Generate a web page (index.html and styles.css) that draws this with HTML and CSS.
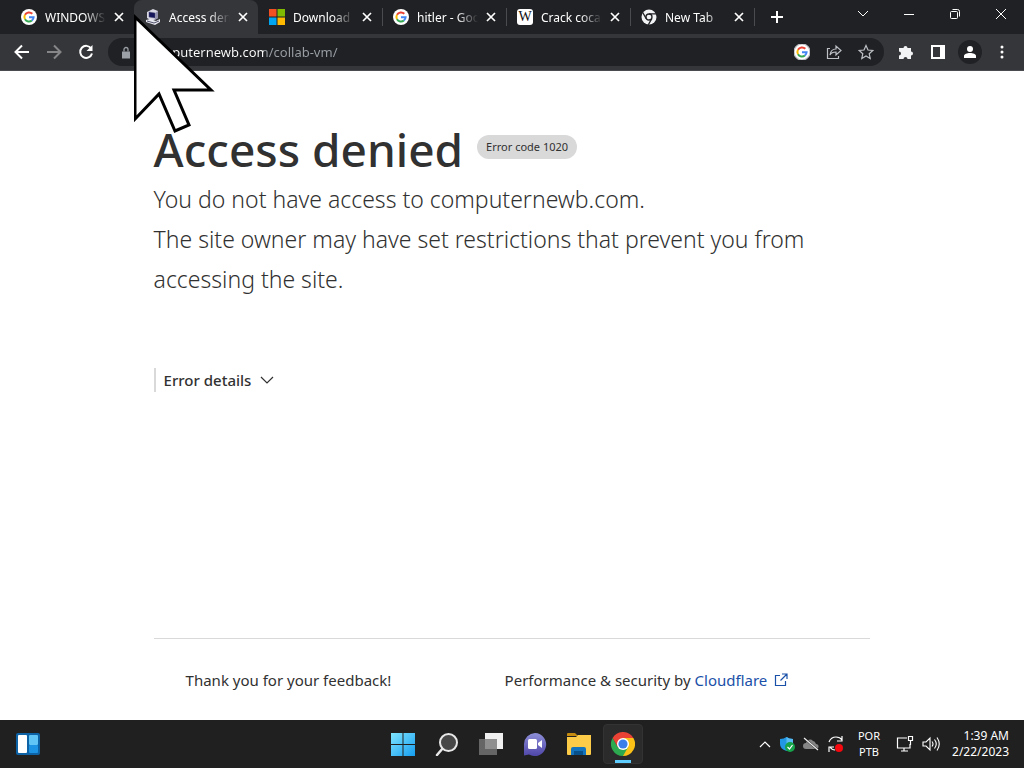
FILE: index.html
```html
<!DOCTYPE html>
<html lang="en">

<head>
	<meta charset="utf-8">
	<meta name="viewport" content="width=device-width, initial-scale=1">
	<title>Access denied</title>
	<link rel="stylesheet" href="styles.css">
</head>

<body>
	<!-- shared icons -->
	<svg class="sprite" aria-hidden="true">
		<symbol id="google" viewBox="0 0 16 16">
			<circle cx="8" cy="8" r="8" fill="#fff" />
			<g fill="none" stroke-width="2">
				<path d="M11.300 4.800A4.600 4.600 0 0 0 4 5.800" stroke="#ea4335" />
				<path d="M4 5.800A4.600 4.600 0 0 0 4 10.300" stroke="#fbbc05" />
				<path d="M4 10.200A4.600 4.600 0 0 0 10.900 11.500" stroke="#34a853" />
				<path d="M10.900 11.500A4.600 4.600 0 0 0 12.600 8.200H8" stroke="#4285f4" />
			</g>
		</symbol>
		<symbol id="close" viewBox="0 0 10 10">
			<path d="M1 1l8 8M9 1L1 9" fill="none" stroke="currentColor" stroke-width="1.700" />
		</symbol>
	</svg>

	<header class="browser">
		<div class="tabs">
			<div class="tab">
				<svg class="favicon" aria-hidden="true"><use href="#google" /></svg>
				<button class="tab-title" type="button">WINDOWS</button>
				<button class="tab-close" type="button" aria-label="Close tab"><svg><use href="#close" /></svg></button>
			</div>
			<div class="tab active">
				<svg class="favicon" viewBox="0 0 16 16" aria-hidden="true">
					<path d="M2 3l6-3 5 2v7l-6 3-5-3z" fill="#d8d8e4" />
					<path d="M4 3l6 1v5L4 8z" fill="#15155c" stroke="#55557a" stroke-width=".5" />
					<path d="M10 4l3-2v7l-3 2z" fill="#9292ae" />
					<path d="M1 11l4-1 6 2 4-2v3l-5 3-9-3z" fill="#e8e8f0" />
					<path d="M2 12l7 2 5-2" fill="none" stroke="#51516b" />
				</svg>
				<button class="tab-title" type="button">Access denied</button>
				<button class="tab-close" type="button" aria-label="Close tab"><svg><use href="#close" /></svg></button>
			</div>
			<div class="tab">
				<svg class="favicon" viewBox="0 0 16 16" aria-hidden="true">
					<path d="M0 0h7.500v7.500H0z" fill="#f25022" />
					<path d="M8.500 0H16v7.500H8.500z" fill="#7fba00" />
					<path d="M0 8.500h7.500V16H0z" fill="#00a4ef" />
					<path d="M8.500 8.500H16V16H8.500z" fill="#ffb900" />
				</svg>
				<button class="tab-title" type="button">Download Windows</button>
				<button class="tab-close" type="button" aria-label="Close tab"><svg><use href="#close" /></svg></button>
			</div>
			<div class="tab divided">
				<svg class="favicon" aria-hidden="true"><use href="#google" /></svg>
				<button class="tab-title" type="button">hitler - Google</button>
				<button class="tab-close" type="button" aria-label="Close tab"><svg><use href="#close" /></svg></button>
			</div>
			<div class="tab divided">
				<span class="favicon wiki" aria-hidden="true">W</span>
				<button class="tab-title" type="button">Crack cocaine</button>
				<button class="tab-close" type="button" aria-label="Close tab"><svg><use href="#close" /></svg></button>
			</div>
			<div class="tab divided">
				<svg class="favicon" viewBox="0 0 16 16" aria-hidden="true">
					<circle cx="8" cy="8" r="7.500" fill="#f1f3f4" />
					<circle cx="8" cy="8" r="3" fill="#f1f3f4" stroke="#202124" stroke-width="1.300" />
					<path d="M8 4.800h7M5.200 9.600L1.700 3.500M10.800 9.600L7.300 15.700" stroke="#202124" stroke-width="1.300" />
				</svg>
				<button class="tab-title" type="button">New Tab</button>
				<button class="tab-close" type="button" aria-label="Close tab"><svg><use href="#close" /></svg></button>
			</div>
			<button class="new-tab divided" type="button" aria-label="New tab">
				<svg width="14" height="14" viewBox="0 0 14 14"><path d="M7 1v12M1 7h12" stroke="#fff" stroke-width="2" /></svg>
			</button>
			<div class="window-buttons">
				<button type="button" aria-label="Search tabs"><svg viewBox="0 0 12 12"><path d="M1 3l5 5 5-5" /></svg></button>
				<button type="button" aria-label="Minimize"><svg viewBox="0 0 12 12"><path d="M1 6.500h10" /></svg></button>
				<button type="button" aria-label="Restore"><svg viewBox="0 0 12 12"><rect x="1.500" y="3.500" width="7" height="7" rx="1" /><path d="M3.500 1.500h5a2 2 0 0 1 2 2v5" /></svg></button>
				<button type="button" aria-label="Close"><svg viewBox="0 0 12 12"><path d="M1 1l10 10M11 1L1 11" /></svg></button>
			</div>
		</div>
		<div class="toolbar">
			<div class="nav">
				<button type="button" aria-label="Back"><svg viewBox="0 0 16 16"><path d="M15 8H2M8 1.500L1.500 8 8 14.500" /></svg></button>
				<button type="button" aria-label="Forward" disabled><svg viewBox="0 0 16 16"><path d="M1 8h13M8 1.500L14.500 8 8 14.500" /></svg></button>
				<button type="button" aria-label="Reload"><svg viewBox="0 0 16 16"><path d="M13.200 4.500A6 6 0 1 0 14 9.500" /><path d="M14.500 1v6h-6z" fill="#fff" stroke="none" /></svg></button>
			</div>
			<div class="address">
				<svg class="lock" viewBox="0 0 10 12" aria-hidden="true"><path d="M1 5h8v7H1z" fill="#9aa0a6" /><path d="M3 5V3a2 2 0 0 1 4 0v2" fill="none" stroke="#9aa0a6" stroke-width="1.300" /></svg>
				<input class="url" type="text" value="computernewb.com/collab-vm/" aria-label="Address">
				<button type="button" aria-label="Search with Google"><svg><use href="#google" /></svg></button>
				<button type="button" aria-label="Share"><svg viewBox="0 0 16 16"><path d="M4 4.500H1.500v10h11V12M4 11c.5-4 3-6 6-6V2l5 4.500-5 4.500V8c-3 0-5 1-6 3z" /></svg></button>
				<button type="button" aria-label="Bookmark"><svg viewBox="0 0 16 16"><path d="M8 1.500l2 4.500 4.800.500-3.600 3.200 1 4.800L8 12l-4.200 2.500 1-4.800L1.200 6.500 6 6z" /></svg></button>
			</div>
			<div class="tools">
				<button type="button" aria-label="Extensions"><svg viewBox="0 0 16 16"><path d="M1 4h4.500a2 2 0 1 1 4 0H13v3.500a2 2 0 1 1 0 4V15H9.500a2 2 0 0 0-4 0H1v-3.500a2 2 0 0 0 0-4z" fill="#f1f3f4" /></svg></button>
				<button type="button" aria-label="Side panel"><svg viewBox="0 0 16 16"><path d="M2 2h12v12H2z" fill="none" stroke="#fff" stroke-width="2" /><path d="M10 2h4v12h-4z" fill="#fff" /></svg></button>
				<button class="profile" type="button" aria-label="Profile"><svg viewBox="0 0 16 16"><circle cx="8" cy="5" r="3" fill="#fff" /><path d="M2 14v-2c0-2 3-3 6-3s6 1 6 3v2z" fill="#fff" /></svg></button>
				<button type="button" aria-label="Menu"><svg viewBox="0 0 16 16"><g fill="#fff"><circle cx="8" cy="3" r="1.500" /><circle cx="8" cy="8" r="1.500" /><circle cx="8" cy="13" r="1.500" /></g></svg></button>
			</div>
		</div>
	</header>

	<main class="page">
		<div class="heading">
			<h1>Access denied</h1>
			<span class="code">Error code 1020</span>
		</div>
		<p class="message">You do not have access to computernewb.com.</p>
		<p class="message">The site owner may have set restrictions that prevent you from accessing the site.</p>
		<button class="details" type="button">Error details
			<svg width="14" height="8" viewBox="0 0 14 8" aria-hidden="true"><path d="M1 1l6 6 6-6" fill="none" stroke="#313131" stroke-width="1.200" /></svg>
		</button>
		<footer class="page-footer">
			<p>Thank you for your feedback!</p>
			<p>Performance &amp; security by <a href="#">Cloudflare
				<svg width="14" height="14" viewBox="0 0 14 14" aria-hidden="true"><path d="M6 2.500H1.500v10h10V8M8 1h5v5M13 1L6.500 7.500" fill="none" stroke="#1a50a8" stroke-width="1.200" /></svg></a></p>
		</footer>
	</main>

	<div class="taskbar">
		<button class="widgets" type="button" aria-label="Widgets">
			<svg width="24" height="22" viewBox="0 0 24 22">
				<rect width="24" height="22" rx="2" fill="#0c62a5" />
				<rect x="2" y="2" width="9" height="18" rx="1" fill="#fff" />
				<rect x="13" y="2" width="9" height="10" rx="1" fill="#61c5f5" />
				<rect x="13" y="12" width="9" height="8" rx="1" fill="#1c93e3" />
			</svg>
		</button>
		<div class="apps">
			<button type="button" aria-label="Start">
				<svg viewBox="0 0 24 24">
					<defs><linearGradient id="win" x2="1" y2="1"><stop stop-color="#80e5ff" /><stop offset="1" stop-color="#159df0" /></linearGradient></defs>
					<path d="M0 1h11.500v11H0zM12.500 1H24v11H12.500zM0 13h11.500v11H0zM12.500 13H24v11H12.500z" fill="url(#win)" />
				</svg>
			</button>
			<button type="button" aria-label="Search">
				<svg viewBox="0 0 24 24"><path d="M8 16l-6 7" stroke="#e8e8e8" stroke-width="2.500" stroke-linecap="round" /><circle cx="13.500" cy="10.500" r="8.500" fill="#484848" stroke="#e8e8e8" stroke-width="2" /></svg>
			</button>
			<button type="button" aria-label="Task view">
				<svg viewBox="0 0 24 24"><path d="M6 1h18v16H6z" fill="#f0f0f0" /><path d="M0 7h18v16H0z" fill="#777" opacity=".8" /></svg>
			</button>
			<button type="button" aria-label="Chat">
				<svg viewBox="0 0 24 24">
					<defs><linearGradient id="chat" x2="0" y2="1"><stop stop-color="#8e8fd8" /><stop offset="1" stop-color="#4f46a8" /></linearGradient></defs>
					<path d="M12 1A11.500 11.500 0 1 1 6 22.500L1 23.500V12A11.500 11.500 0 0 1 12 1z" fill="url(#chat)" />
					<rect x="5" y="7" width="9" height="10" rx="1.500" fill="#fff" /><path d="M15 11l4-3v8l-4-3z" fill="#fff" />
				</svg>
			</button>
			<button type="button" aria-label="File Explorer">
				<svg viewBox="0 0 24 24"><path d="M0 2q0-1 1-1h7l3 3H0z" fill="#c58a10" /><path d="M0 5h9l2-2h13v19q0 1-1 1H1q-1 0-1-1z" fill="#fccb47" /><path d="M4 23v-6q0-2 2-2h11q2 0 2 2v6z" fill="#1373bd" /><path d="M7 19h9v4H7z" fill="#075089" /></svg>
			</button>
			<button class="running" type="button" aria-label="Chrome">
				<svg viewBox="0 0 24 24">
					<path d="M12 12V6h10.400A12 12 0 0 1 12 24z" fill="#fbc116" />
					<path d="M12 24A12 12 0 0 1 1.600 6l5.200 9L12 18l5.200-3z" fill="#2da94f" />
					<path d="M1.600 6A12 12 0 0 1 22.400 6H12v6L6.800 15z" fill="#ea4335" />
					<circle cx="12" cy="12" r="6" fill="#fff" /><circle cx="12" cy="12" r="4.600" fill="#3b7de9" />
				</svg>
			</button>
		</div>
		<div class="tray">
			<button type="button" aria-label="Show hidden icons"><svg width="12" height="8" viewBox="0 0 12 8"><path d="M1 7l5-5 5 5" fill="none" stroke="#fff" stroke-width="1.200" /></svg></button>
			<svg width="16" height="16" viewBox="0 0 16 16" aria-hidden="true"><path d="M1 3q4 0 6.500-2Q10 3 14 3v5q0 5-6.500 7Q1 13 1 8z" fill="#2298e4" /><path d="M7.500 1Q10 3 14 3v5H7.500z" fill="#58bbf3" /><circle cx="11" cy="11" r="5" fill="#16a34a" /><path d="M8.500 11l2 2 3-4" fill="none" stroke="#fff" stroke-width="1.200" /></svg>
			<svg width="16" height="16" viewBox="0 0 16 16" aria-hidden="true"><path d="M3 13a3 3 0 0 1 0-6 4 4 0 0 1 7-2q2 0 3 3a2.500 2.500 0 0 1 0 5z" fill="#858585" /><path d="M1 2l14 12" stroke="#202020" stroke-width="2" /><path d="M1 2l14 12" stroke="#eee" stroke-width="1.200" /></svg>
			<svg width="18" height="18" viewBox="0 0 18 18" aria-hidden="true"><path d="M2 7q2-5 7-5 4 0 6 3M15 1v5h-5M8 15q-3 0-5-3M2 17v-5h5" fill="none" stroke="#fff" stroke-width="1.200" /><circle cx="12" cy="13" r="4" fill="#f5080e" /></svg>
			<button class="language" type="button">POR<br>PTB</button>
			<svg width="18" height="18" viewBox="0 0 18 18" aria-hidden="true"><path d="M11 3H1.500v10H14V9M5 16h7M8 13v3M12.500 1.500h4v4h-4zM14.500 6v4" fill="none" stroke="#fff" stroke-width="1.200" /></svg>
			<svg width="18" height="18" viewBox="0 0 18 18" aria-hidden="true"><path d="M1 7h3l4-4v12l-4-4H1zM10 6.500q2 2.500 0 5M12.500 4.500q3.500 4.500 0 9M15 2.500q4.500 6.500 0 13" fill="none" stroke="#fff" stroke-width="1.100" /></svg>
			<button class="clock" type="button">1:39 AM<br>2/22/2023</button>
		</div>
	</div>

	<svg class="cursor" width="82" height="122" viewBox="0 0 82 122" aria-hidden="true">
		<path d="M1 4v102l24-25 16 37 14-6-15-35h37z" fill="#fff" stroke="#000" stroke-width="3" />
	</svg>
</body>

</html>
```
FILE: styles.css
```css
* {
	margin: 0;
	padding: 0;
	box-sizing: border-box;
}
body {
	position: relative;
	display: flex;
	flex-direction: column;
	min-height: 100vh;
	font-family: "Noto Sans", "Open Sans", sans-serif;
	color: #313131;
	background-color: #ffffff;
}
button {
	border: none;
	background: none;
	font: inherit;
	color: inherit;
	cursor: pointer;
}
button svg {
	display: block;
}
.sprite {
	position: absolute;
	width: 0;
	height: 0;
}

/* browser */
.browser {
	color: #ffffff;
	background-color: #202124;
}
.tabs {
	display: flex;
	height: 34px;
	padding-left: 10px;
}
.tab {
	display: flex;
	align-items: center;
	flex: 0 1 124px;
	min-width: 0;
	padding: 0 10px 0 11px;
}
.tab.active {
	background-color: #35363a;
	border-radius: 8px 8px 0 0;
}
.divided {
	background: linear-gradient(#4a4b4f, #4a4b4f) no-repeat left center / 1px 18px;
}
.favicon {
	flex: none;
	width: 16px;
	height: 16px;
}
.wiki {
	border-radius: 3px;
	font: 14px/16px "Liberation Serif", serif;
	text-align: center;
	color: #111111;
	background-color: #ffffff;
}
.tab-title {
	flex: 1;
	min-width: 0;
	margin: 0 8px;
	overflow: hidden;
	font-size: 12px;
	text-align: left;
	white-space: nowrap;
	-webkit-mask-image: linear-gradient(to right, #000 65%, transparent);
	mask-image: linear-gradient(to right, #000 65%, transparent);
}
.tab-close svg {
	width: 10px;
	height: 10px;
}
.new-tab {
	padding: 0 16px;
}
.window-buttons {
	display: flex;
	margin-left: auto;
}
.window-buttons button {
	width: 46px;
	padding: 0 17px 6px;
}
.window-buttons svg {
	width: 12px;
	height: 12px;
	fill: none;
	stroke: #ffffff;
}
.toolbar {
	display: flex;
	align-items: center;
	height: 37px;
	padding: 0 6px;
	border-bottom: 1px solid #4a4b4e;
	background-color: #35363a;
}
.nav,
.tools {
	display: flex;
	align-items: center;
}
.nav button,
.tools button,
.address button {
	width: 32px;
	padding: 0 8px;
}
.toolbar button svg {
	width: 16px;
	height: 16px;
}
.nav svg {
	fill: none;
	stroke: #ffffff;
	stroke-width: 2;
}
.nav button:disabled {
	opacity: 0.4;
}
.address {
	display: flex;
	align-items: center;
	flex: 1;
	height: 28px;
	margin: 0 6px;
	padding: 0 2px 0 13px;
	border-radius: 14px;
	background-color: #202124;
}
.address button svg {
	fill: none;
	stroke: #bdc1c6;
	stroke-width: 1.2;
}
.lock {
	width: 10px;
	height: 13px;
}
.url {
	flex: 1;
	min-width: 0;
	margin-left: 15px;
	border: none;
	outline: none;
	font-family: inherit;
	font-size: 13px;
	color: transparent;
	background: linear-gradient(to right, #ffffff 118px, #9aa0a6 118px);
	-webkit-background-clip: text;
	background-clip: text;
}
.tools button.profile {
	width: 24px;
	margin: 0 4px;
	padding: 4px;
	border-radius: 12px;
	background-color: #202124;
}

/* error page */
.page {
	display: flex;
	flex-direction: column;
	align-items: flex-start;
	flex: 1;
	width: 70%;
	margin: 0 auto;
	padding-top: 48px;
}
.heading {
	display: flex;
	align-items: center;
	gap: 14px;
}
h1 {
	font-size: 46px;
	line-height: 60px;
	font-weight: 500;
}
.code {
	margin-bottom: 4px;
	padding: 0 9px;
	border-radius: 12px;
	font-size: 11px;
	line-height: 24px;
	background-color: #d9d9d9;
}
.message {
	font-size: 23px;
	line-height: 40px;
	font-weight: 350;
}
.details {
	display: flex;
	align-items: center;
	gap: 9px;
	margin-top: 69px;
	padding-left: 8px;
	border-left: 2px solid #d9d9d9;
	font-size: 15px;
	line-height: 24px;
	font-weight: 500;
}
.page-footer {
	display: grid;
	grid-template-columns: 319px 1fr;
	width: 100%;
	margin-top: auto;
	padding: 29px 32px 28px;
	border-top: 1px solid #d9d9d9;
	font-size: 15px;
	line-height: 24px;
}
.page-footer a {
	color: #1a50a8;
	text-decoration: none;
}
.page-footer a svg {
	margin-left: 3px;
	vertical-align: -1px;
}

/* taskbar */
.taskbar {
	display: grid;
	grid-template-columns: 1fr auto 1fr;
	align-items: center;
	height: 48px;
	padding: 0 15px 0 16px;
	color: #ffffff;
	background-color: #202020;
}
.widgets {
	justify-self: start;
}
.apps {
	display: flex;
	gap: 4px;
}
.apps button {
	width: 40px;
	height: 40px;
	padding: 8px;
	border-radius: 4px;
}
.apps svg {
	width: 24px;
	height: 24px;
}
.apps .running {
	border: 1px solid #333333;
	background: linear-gradient(#60cdff, #60cdff) no-repeat center bottom / 16px 3px #2b2b2b;
	padding: 7px;
}
.tray {
	display: flex;
	align-items: center;
	justify-content: flex-end;
	gap: 8px;
	font-size: 12px;
	line-height: 16px;
}
.tray svg {
	flex: none;
}
.language {
	margin: 0 8px 0 5px;
	font-size: 11px;
}
.tray .clock {
	margin-left: 4px;
	text-align: right;
}

/* mouse pointer over the window */
.cursor {
	position: absolute;
	top: 13px;
	left: 134px;
	pointer-events: none;
}
```
